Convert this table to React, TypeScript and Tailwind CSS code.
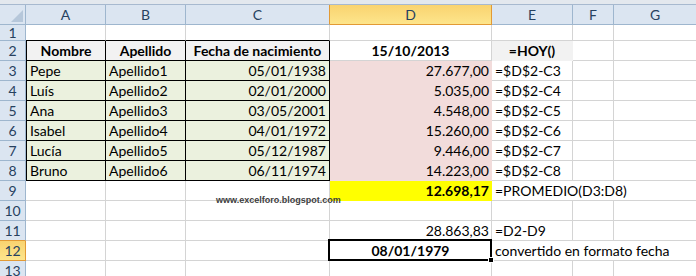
import React from "react";
import { twMerge } from "tailwind-merge";

const base =
  "box-border border-r border-b border-[#d4d4d4] flex items-center px-[3px] whitespace-nowrap overflow-visible text-[14px] leading-[19px] text-black bg-white";

const rowHead =
  "box-border border-r border-b border-[#9eb6ce] bg-[#dbe5f1] flex items-center justify-center text-[14px] leading-[19px] text-[#27415f]";

const colHead =
  "box-border h-[20px] border-r border-b border-[#9eb6ce] bg-[#dbe5f1] flex items-center justify-center text-[14px] leading-[19px] text-[#27415f]";

type C = { t?: React.ReactNode; c?: string; span?: 1 | 2 | 3; rel?: React.ReactNode };

function Cell({ t, c, span, h, rel }: C & { h: string }) {
  const spanCls = span === 3 ? "col-span-3" : span === 2 ? "col-span-2" : "";
  return (
    <div className={twMerge(base, h, spanCls, c, rel ? "relative" : "")}>
      {t}
      {rel}
    </div>
  );
}

const hdr = "bg-[#f2f2f2] font-bold justify-center";
const tblA = "border-l border-l-black border-r-black border-b-black bg-[#ebf1de]";
const tbl = "border-r-black border-b-black bg-[#ebf1de]";
const pink = "bg-[#f2dcdb] border-[#f2dcdb] justify-end pr-[2px]";

const names = ["Pepe", "Luís", "Ana", "Isabel", "Lucía", "Bruno"];
const dates = ["05/01/1938", "02/01/2000", "03/05/2001", "04/01/1972", "05/12/1987", "06/11/1974"];
const nums = ["27.677,00", "5.035,00", "4.548,00", "15.260,00", "9.446,00", "14.223,00"];

type Row = { n: number; h: string; headCls?: string; cells: C[] };

function buildRows(): Row[] {
  const rows: Row[] = [];
  rows.push({
    n: 1,
    h: "h-[16px]",
    cells: [
      { c: "border-b-black" },
      { c: "border-b-black" },
      { c: "border-b-black" },
      {},
      {},
      {},
      {},
    ],
  });
  rows.push({
    n: 2,
    h: "h-[20px]",
    cells: [
      { t: "Nombre", c: twMerge(tblA, hdr) },
      { t: "Apellido", c: twMerge(tbl, hdr) },
      { t: "Fecha de nacimiento", c: twMerge(tbl, hdr) },
      { t: "15/10/2013", c: "font-bold justify-center" },
      { t: "=HOY()", c: "bg-[#f2f2f2] border-[#f2f2f2] font-bold justify-center" },
      {},
      {},
    ],
  });
  for (let i = 0; i < 6; i++) {
    rows.push({
      n: 3 + i,
      h: "h-[20px]",
      cells: [
        { t: names[i], c: tblA },
        { t: "Apellido" + (i + 1), c: tbl },
        { t: dates[i], c: twMerge(tbl, "justify-end") },
        { t: nums[i], c: pink },
        { t: "=$D$2-C" + (3 + i) },
        {},
        {},
      ],
    });
  }
  rows.push({
    n: 9,
    h: "h-[20px]",
    cells: [
      {},
      {},
      {},
      { t: "12.698,17", c: "bg-[#ffff00] border-[#ffff00] font-bold justify-end pr-[2px]" },
      { t: "=PROMEDIO(D3:D8)", span: 3 },
    ],
  });
  rows.push({ n: 10, h: "h-[20px]", cells: [{}, {}, {}, {}, {}, {}, {}] });
  rows.push({
    n: 11,
    h: "h-[20px]",
    headCls: "border-b-[#e29a35]",
    cells: [{}, {}, {}, { t: "28.863,83", c: "justify-end pr-[2px]" }, { t: "=D2-D9" }, {}, {}],
  });
  rows.push({
    n: 12,
    h: "h-[20px]",
    headCls: "bg-gradient-to-b from-[#f9d36f] to-[#fde58c] border-[#e29a35] text-[#27415f]",
    cells: [
      {},
      {},
      {},
      {
        t: "08/01/1979",
        c: "font-bold justify-center",
        rel: (
          <>
            <div className="absolute -left-[2px] -top-[2px] -right-[1px] -bottom-[1px] border-2 border-black pointer-events-none" />
            <div className="absolute -right-[3px] -bottom-[3px] w-[6px] h-[6px] bg-black border border-white" />
          </>
        ),
      },
      { t: "convertido en formato fecha", span: 3 },
    ],
  });
  rows.push({ n: 13, h: "h-[20px]", cells: [{}, {}, {}, {}, {}, {}, {}] });
  return rows;
}

export default function App() {
  const rows = buildRows();
  const cols = ["A", "B", "C", "D", "E", "F", "G"];
  return (
    <div className="relative w-[696px] h-[276px] overflow-hidden bg-white font-[Lato,'Liberation_Sans',sans-serif]">
      <div className="box-border h-[5px] bg-[#e3e8ee] border-b border-[#a7b9cf]" />
      <div className="grid grid-cols-[26px_80px_80px_144px_162px_81px_41px_83px]">
        <div className="box-border h-[20px] border-r border-b border-[#9eb6ce] bg-[#dbe5f1] relative">
          <svg className="absolute right-[2px] bottom-[2px]" width="12" height="12" viewBox="0 0 12 12">
            <polygon points="12,0 12,12 0,12" fill="#b6c7da" />
          </svg>
        </div>
        {cols.map((l) => (
          <div
            key={l}
            className={twMerge(
              colHead,
              l === "C" ? "border-r-[#e29a35]" : "",
              l === "D"
                ? "bg-gradient-to-b from-[#f9d36f] to-[#fde58c] border-[#e29a35]"
                : ""
            )}
          >
            {l}
          </div>
        ))}
        {rows.map((r) => (
          <React.Fragment key={r.n}>
            <div className={twMerge(rowHead, r.h, r.headCls)}>{r.n}</div>
            {r.cells.map((cell, i) => (
              <Cell key={i} h={r.h} {...cell} />
            ))}
          </React.Fragment>
        ))}
      </div>
      <div className="absolute left-[216px] top-[195px] text-[9px] font-bold leading-[10px] text-[#404040] font-['Liberation_Sans',Arial,sans-serif]">
        www.excelforo.blogspot.com
      </div>
    </div>
  );
}
